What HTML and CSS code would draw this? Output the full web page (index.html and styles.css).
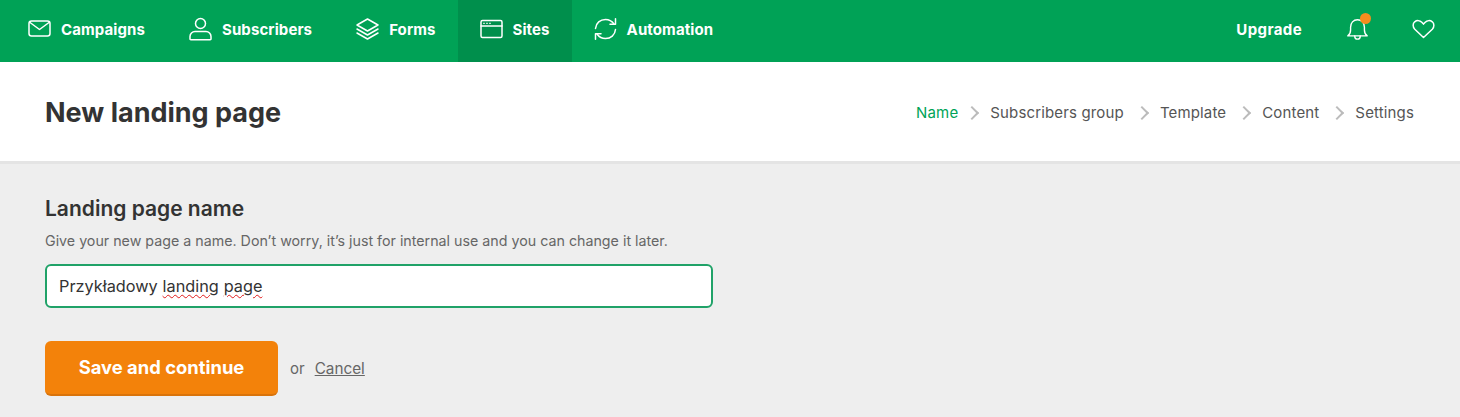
FILE: index.html
```html
<!DOCTYPE html>
<html lang="en">
<head>
<meta charset="utf-8">
<title>New landing page</title>
<link rel="stylesheet" href="styles.css">
</head>
<body>
<nav class="topbar">
  <ul class="nav-list">
    <li class="nav-item">
      <svg class="nav-icon" viewBox="0 0 23 24"><rect x="1" y="4" width="21" height="15" rx="2.500"/><path d="M2 5.500l9.500 7 9.500-7"/></svg>
      <span class="nav-label">Campaigns</span>
    </li>
    <li class="nav-item">
      <svg class="nav-icon" viewBox="0 0 23 24"><circle cx="11.500" cy="6.500" r="5"/><path d="M1 22v-2.500a5 5 0 0 1 5-5h11a5 5 0 0 1 5 5V22a.8.8 0 0 1-.8.8H1.800A.8.800 0 0 1 1 22z"/></svg>
      <span class="nav-label">Subscribers</span>
    </li>
    <li class="nav-item">
      <svg class="nav-icon" viewBox="0 0 23 24"><path d="M11.500 2L22 8l-10.500 6L1 8z"/><path d="M1 12l10.500 6L22 12"/><path d="M1 16l10.500 6L22 16"/></svg>
      <span class="nav-label">Forms</span>
    </li>
    <li class="nav-item is-active">
      <svg class="nav-icon" viewBox="0 0 23 24"><rect x="1" y="3.500" width="21" height="17" rx="1.500"/><path d="M1 9h21"/><path class="dots" d="M3.500 6.300h1M6.500 6.300h1M9.500 6.300h1"/></svg>
      <span class="nav-label">Sites</span>
    </li>
    <li class="nav-item">
      <svg class="nav-icon" viewBox="0 0 23 24"><path d="M1.500 11.500C2 6 6.200 2.500 11.500 2.500c3.500 0 6.300 1.500 8.300 4.300"/><path d="M21.500 1.800v5.500H16"/><path d="M21.500 12.500C21 18 16.800 21.500 11.500 21.500c-3.500 0-6.300-1.500-8.300-4.300"/><path d="M1.500 22.200v-5.500H7"/></svg>
      <span class="nav-label">Automation</span>
    </li>
  </ul>
  <div class="nav-right">
    <span class="upgrade">Upgrade</span>
    <span class="bell">
      <svg class="nav-icon" viewBox="0 0 23 26"><path d="M1 20.500c2-1.500 3-3.500 3-6.500V11c0-4.500 3-8 7.500-8S19 6.500 19 11v3c0 3 1 5 3 6.500z"/><path d="M8.500 20.500c0 2 1.300 3.500 3 3.500s3-1.500 3-3.500"/></svg>
      <span class="badge"></span>
    </span>
    <svg class="nav-icon heart" viewBox="0 0 23 20"><path d="M11.500 18.500L2.800 10.200C.5 7.800.7 4.600 2.700 2.800c2.200-1.800 5.200-1.500 7.100.5l1.700 1.800 1.700-1.800c1.900-2 4.900-2.300 7.100-.5 2 1.800 2.200 5 0 7.400z"/></svg>
  </div>
</nav>

<header class="page-head">
  <h1>New landing page</h1>
  <ol class="steps">
    <li class="step is-current">Name</li>
    <li class="step">Subscribers group</li>
    <li class="step">Template</li>
    <li class="step">Content</li>
    <li class="step">Settings</li>
  </ol>
</header>

<main class="content">
  <h2>Landing page name</h2>
  <p class="hint">Give your new page a name. Don’t worry, it’s just for internal use and you can change it later.</p>
  <div class="field">Przykładowy <span class="misspelled">landing</span> <span class="misspelled">page</span></div>
  <div class="actions">
    <button class="btn" type="button">Save and continue</button>
    <span class="or">or</span>
    <a class="cancel" href="#">Cancel</a>
  </div>
</main>
</body>
</html>
```
FILE: styles.css
```css
* { box-sizing: border-box; }
html, body { height: 100%; }
body {
  margin: 0;
  background: #eeeeee;
  color: #333;
  font-family: "Inter", "Open Sans", sans-serif;
  overflow: hidden;
}
.topbar {
  height: 62px;
  background: #00a256;
  color: #fff;
  display: flex;
  justify-content: space-between;
  padding: 0 25px 0 6px;
}
.nav-list {
  list-style: none;
  margin: 0;
  padding: 0;
  display: flex;
}
.nav-item {
  display: flex;
  align-items: center;
  gap: 10px;
  padding: 0 22px 4px;
  font-size: 15px;
  font-weight: 700;
  letter-spacing: 0.1px;
}
.nav-item.is-active { background: #008f4c; }
.nav-icon {
  width: 23px;
  height: 24px;
  fill: none;
  stroke: #fff;
  stroke-width: 1.500;
  stroke-linecap: round;
  stroke-linejoin: round;
  flex: none;
}
.dots { stroke-width: 1; }
.nav-right {
  display: flex;
  align-items: center;
  padding-bottom: 4px;
}
.upgrade {
  font-size: 15px;
  font-weight: 700;
  letter-spacing: 0.4px;
  margin-right: 44px;
}
.bell {
  position: relative;
  display: flex;
  margin-right: 43px;
}
.badge {
  position: absolute;
  top: -4px;
  right: -2px;
  width: 11px;
  height: 11px;
  border-radius: 50%;
  background: #f58d1e;
}
.heart { height: 20px; }
.page-head {
  height: 102px;
  padding: 2px 46px 0 45px;
  background: #fff;
  border-bottom: 3px solid #e4e4e4;
  display: flex;
  align-items: center;
  justify-content: space-between;
}
h1 {
  margin: 0;
  font-size: 27px;
  font-weight: 700;
  color: #333;
}
.steps {
  list-style: none;
  margin: 0;
  padding: 0;
  display: flex;
  font-size: 15px;
  letter-spacing: 0.15px;
  color: #555;
}
.step { display: flex; align-items: center; }
.step + .step::before {
  content: "";
  width: 8px;
  height: 8px;
  margin: 0 13px;
  border-top: 2.500px solid #bbb;
  border-right: 2.500px solid #bbb;
  transform: rotate(45deg);
}
.is-current + .step::before { margin-left: 9px; }
.step.is-current { color: #00a357; }
.content { padding: 32px 45px 0; }
h2 {
  margin: 0;
  font-size: 21px;
  line-height: 26px;
  font-weight: 600;
  color: #333;
}
.hint {
  margin: 9px 0 0;
  font-size: 14.250px;
  line-height: 20px;
  color: #666;
}
.field {
  width: 668px;
  height: 44px;
  margin-top: 13px;
  padding: 0 12px;
  background: #fff;
  border: 2px solid #20a268;
  border-radius: 6px;
  display: flex;
  align-items: center;
  gap: 0.3em;
  font-size: 16.300px;
  color: #333;
}
.misspelled {
  text-decoration: underline wavy #e01b1b 1px;
  text-underline-offset: 2px;
}
.actions {
  display: flex;
  align-items: center;
  margin-top: 33px;
}
.btn {
  width: 233px;
  height: 55px;
  border: 0;
  border-bottom: 2px solid #d9730a;
  border-radius: 6px;
  background: #f3820a;
  color: #fff;
  font-family: inherit;
  font-size: 18.400px;
  font-weight: 700;
  padding: 0 0 1px;
}
.or {
  margin-left: 12px;
  font-size: 15px;
  color: #666;
}
.cancel {
  margin-left: 10px;
  font-size: 15.300px;
  color: #666;
}
```
